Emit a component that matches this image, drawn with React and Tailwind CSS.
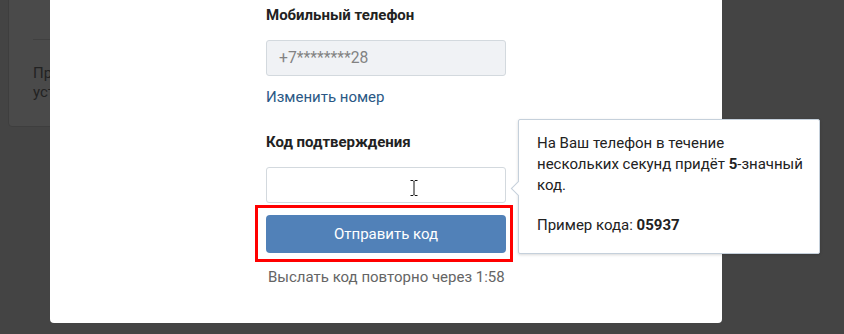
export default function App() {
  return (
    <div className="relative w-[844px] h-[334px] overflow-hidden bg-[#444444] font-['Roboto',sans-serif]">
      {/* dimmed page behind the modal */}
      <div className="absolute left-[8px] top-[-20px] w-[300px] h-[147px] rounded-[4px] bg-[#4a4a4a] border border-[#3e3e3e]">
        <div className="ml-[24px] mt-[58px] border-t border-[#404040]"></div>
        <p className="ml-[24px] mt-[24px] text-[15px] leading-[19px] text-[#222]">Привязка номера<br />устройства</p>
      </div>

      {/* modal */}
      <div className="absolute left-[50px] top-[-10px] w-[672px] h-[333px] bg-white rounded-b-[4px]">
        <div className="pl-[216px] pt-[15px] w-[456px] text-[#222]">
          <div className="w-[240px]">
            <div className="text-[15px] leading-[20px] font-bold text-[#222]">Мобильный телефон</div>
            <div className="mt-[15px] h-[36px] flex items-center px-[12px] bg-[#f0f2f5] border border-[#d3d9de] rounded-[3px] text-[15.7px] text-[#828282]">
              +7********28
            </div>
            <div className="mt-[11px] text-[15px] leading-[20px] text-[#2a5885]">Изменить номер</div>
            <div className="mt-[25px] text-[15px] leading-[20px] font-bold text-[#222]">Код подтверждения</div>
            <div className="relative mt-[15px] h-[36px] bg-white border border-[#d3d9de] rounded-[3px]">
              <svg className="absolute left-[143px] top-[12px]" width="8" height="16" viewBox="0 0 8 16">
                <path d="M0.5 0.5h2.5l1 1 1-1h2.5M4 1.5v13M0.5 15.5h2.5l1-1 1 1h2.5" fill="none" stroke="#111" strokeWidth="1" />
              </svg>
            </div>
            <div className="mt-[2px] ml-[-11px] mr-[-7px] border-[3px] border-[#ff0000] pl-[8px] pr-[4px] pt-[7px] pb-[6px]">
              <button className="w-full h-[38px] rounded-[4px] bg-[#5181b8] text-white text-[15px]">Отправить код</button>
            </div>
            <div className="mt-[5px] pl-[2px] text-[15px] leading-[20px] text-[#656565]">Выслать код повторно через 1:58</div>
          </div>
        </div>
      </div>

      {/* tooltip */}
      <div className="absolute left-[518px] top-[119px] w-[302px] h-[135px] bg-white border border-[#c5d0db] rounded-[2px] shadow-[0_1px_3px_rgba(0,0,0,0.15)]">
        <div className="absolute left-[-6px] top-[63px] w-[11px] h-[11px] rotate-45 bg-white border-l border-b border-[#c5d0db]"></div>
        <div className="relative pl-[18px] pr-[12px] pt-[13px] text-[15px] leading-[21px] text-[#222]">
          <p>На Ваш телефон в течение<br />нескольких секунд придёт <b>5</b>-значный<br />код.</p>
          <p className="mt-[19px]">Пример кода: <b>05937</b></p>
        </div>
      </div>
    </div>
  )
}
